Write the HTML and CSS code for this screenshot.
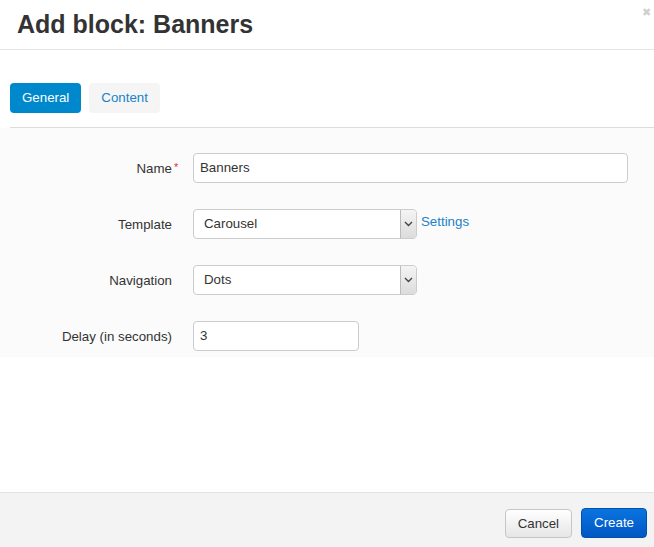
FILE: index.html
```html
<!DOCTYPE html>
<html>
<head>
<meta charset="utf-8">
<link rel="stylesheet" href="styles.css">
</head>
<body>
<div class="modal">
  <div class="header">
    <h1 class="title">Add block: Banners</h1>
    <span class="close">&#x2716;</span>
  </div>
  <div class="body">
    <div class="tabs">
      <span class="tab active">General</span>
      <span class="tab">Content</span>
    </div>
    <div class="form">
      <div class="row">
        <label class="label">Name<span class="req">*</span></label>
        <div class="field"><div class="input wide">Banners</div></div>
      </div>
      <div class="row">
        <label class="label">Template</label>
        <div class="field">
          <div class="select"><span class="sel-text">Carousel</span><span class="arrow"><svg width="9" height="6" viewBox="0 0 9 6"><path d="M1 1 L4.5 4.5 L8 1" fill="none" stroke="#444" stroke-width="1.4"/></svg></span></div>
          <a class="link">Settings</a>
        </div>
      </div>
      <div class="row">
        <label class="label">Navigation</label>
        <div class="field">
          <div class="select"><span class="sel-text">Dots</span><span class="arrow"><svg width="9" height="6" viewBox="0 0 9 6"><path d="M1 1 L4.5 4.5 L8 1" fill="none" stroke="#444" stroke-width="1.4"/></svg></span></div>
        </div>
      </div>
      <div class="row">
        <label class="label">Delay (in seconds)</label>
        <div class="field"><div class="input short">3</div></div>
      </div>
    </div>
  </div>
  <div class="footer">
    <span class="btn cancel">Cancel</span>
    <span class="btn create">Create</span>
  </div>
</div>
</body>
</html>
```
FILE: styles.css
```css
* { box-sizing: border-box; }
html, body { margin: 0; padding: 0; }
body {
  font-family: "Liberation Sans", Arial, sans-serif;
  font-size: 13.3px;
  color: #333;
  background: #fff;
  width: 654px;
  height: 547px;
  overflow: hidden;
}
.modal {
  display: flex;
  flex-direction: column;
  height: 547px;
}
.header {
  position: relative;
  height: 50px;
  border-bottom: 1px solid #e5e5e5;
  padding: 9px 17px 0;
}
.title {
  margin: 0;
  font-size: 25px;
  font-weight: bold;
  line-height: 30px;
  color: #333;
}
.close {
  position: absolute;
  right: 3px;
  top: 6px;
  font-size: 11px;
  color: #d0d0d0;
}
.body {
  flex: 1;
  padding: 33px 0 0 10px;
}
.tabs {
  display: flex;
  gap: 8px;
  padding-bottom: 14px;
  border-bottom: 1px solid #ddd;
}
.tab {
  display: inline-block;
  height: 30px;
  line-height: 30px;
  padding: 0 12px;
  border-radius: 4px;
  background: #f5f5f5;
  color: #1a82c9;
}
.tab.active {
  background: #0088cc;
  color: #fff;
}
.form {
  margin-left: -10px;
  background: #fbfbfb;
  padding: 25px 0 6px;
}
.row {
  display: flex;
  align-items: center;
  height: 30px;
  margin-bottom: 26px;
}
.row:last-child { margin-bottom: 0; }
.label {
  width: 172px;
  text-align: right;
  color: #333;
  position: relative;
}
.req {
  position: absolute;
  left: 174px;
  top: 0;
  color: #e3313a;
  font-size: 11px;
}
.field {
  margin-left: 21px;
  display: flex;
  align-items: flex-start;
}
.input {
  height: 30px;
  line-height: 28px;
  border: 1px solid #ccc;
  border-radius: 4px;
  background: #fff;
  padding: 0 6px;
  color: #333;
}
.input.wide { width: 435px; }
.input.short { width: 166px; }
.select {
  display: flex;
  width: 224px;
  height: 30px;
  border: 1px solid #ccc;
  border-radius: 4px;
  background: #fff;
  overflow: hidden;
}
.sel-text {
  flex: 1;
  line-height: 28px;
  padding-left: 10px;
}
.arrow {
  width: 16px;
  border-left: 1px solid #bbb;
  background: linear-gradient(#f4f4f4, #dcdcdc);
  display: flex;
  align-items: center;
  justify-content: center;
}
.link {
  color: #1a82c9;
  margin-left: 4px;
  line-height: 26px;
}
.footer {
  height: 55px;
  border-top: 1px solid #e2e2e2;
  background: #f3f3f3;
  display: flex;
  justify-content: flex-end;
  align-items: flex-start;
  gap: 9px;
  padding: 15px 7px 0 0;
}
.btn {
  display: inline-block;
  height: 30px;
  line-height: 28px;
  padding: 0 12px;
  border-radius: 4px;
}
.cancel {
  border: 1px solid #c6c6c6;
  background: linear-gradient(#ffffff, #e6e6e6);
  color: #333;
  margin-top: 1px;
  height: 29px;
  line-height: 27px;
}
.create {
  border: 1px solid #0050b0;
  background: linear-gradient(#0a74e0, #0057c2);
  color: #fff;
}
```
